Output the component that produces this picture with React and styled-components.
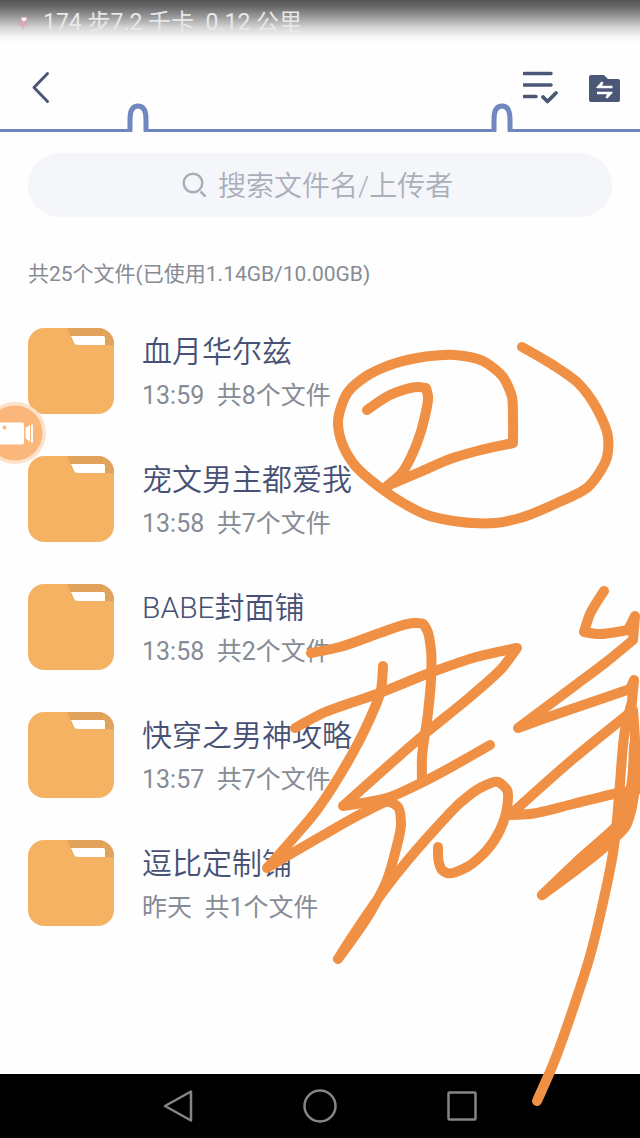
import React from 'react';
import styled, { createGlobalStyle } from 'styled-components';

const GlobalStyle = createGlobalStyle`
  * { box-sizing: border-box; }
  body {
    margin: 0;
    background: #fefefe;
    font-family: Roboto, "Noto Sans CJK SC", sans-serif;
  }
  button { padding: 0; border: 0; background: none; cursor: pointer; }
  svg { display: block; }
`;

const Page = styled.div`
  position: relative;
  display: flex;
  flex-direction: column;
  min-height: 100vh;
  overflow: hidden;
`;

const StatusBar = styled.div`
  display: flex;
  align-items: center;
  gap: 13px;
  height: 44px;
  padding: 2px 18px 0;
  color: #e8e8e8;
  font-size: 23px;
  line-height: 42px;
  white-space: pre;
  background: linear-gradient(#555 0, #666 6px, #959595 16px, #d2d2d2 27px, #f6f6f6 37px, #fefefe 44px);
`;

const Header = styled.header`
  position: relative;
  display: flex;
  align-items: center;
  justify-content: space-between;
  height: 88px;
  padding: 0 20px 0 30px;
  border-bottom: 3px solid #6f86bd;
`;

const Actions = styled.div`
  display: flex;
  gap: 30px;
`;

const IconButton = styled.button`
  display: flex;
  color: #4b5776;
`;

const Arch = styled.svg`
  position: absolute;
  bottom: -3px;
  ${({ $side }) => $side}: 127px;
`;

const Main = styled.main`
  flex: 1;
  padding: 21px 28px 0;
`;

const SearchBox = styled.label`
  display: flex;
  align-items: center;
  justify-content: center;
  gap: 10px;
  height: 64px;
  border-radius: 32px;
  background: #f4f6fa;
  color: #a9afba;
`;

const SearchInput = styled.input`
  width: 240px;
  height: 44px;
  padding: 3px 0 0;
  border: 0;
  outline: 0;
  background: none;
  color: #4b5776;
  font-family: inherit;
  font-size: 28px;
  font-weight: 350;
  &::placeholder { color: #a9afba; opacity: 1; }
`;

const Summary = styled.p`
  margin: 41px 0 38px;
  color: #868b95;
  font-size: 21px;
  line-height: 32px;
`;

const FileList = styled.ul`
  display: flex;
  flex-direction: column;
  gap: 42px;
  margin: 0;
  padding: 0;
  list-style: none;
`;

const FolderRow = styled.li`
  display: flex;
  align-items: center;
  gap: 28px;
  height: 86px;
`;

const FolderText = styled.div`
  display: flex;
  flex-direction: column;
  gap: 4px;
  padding-top: 2px;
`;

const FolderName = styled.span`
  color: #465175;
  font-size: 30px;
  font-weight: 350;
  line-height: 44px;
  white-space: nowrap;
`;

const FolderMeta = styled.span`
  color: #868b95;
  font-size: 25px;
  line-height: 36px;
  white-space: pre;
`;

const RecordButton = styled.button`
  position: absolute;
  top: 402px;
  left: -16px;
`;

const NavBar = styled.nav`
  display: flex;
  justify-content: center;
  height: 64px;
  background: #000;
`;

const NavButton = styled.button`
  display: flex;
  align-items: center;
  justify-content: center;
  width: 142px;
`;

const Ink = styled.svg`
  position: absolute;
  top: 0;
  left: 0;
  pointer-events: none;
`;

const folders = [
  { name: '血月华尔兹', time: '13:59', count: 8 },
  { name: '宠文男主都爱我', time: '13:58', count: 7 },
  { name: 'BABE封面铺', time: '13:58', count: 2 },
  { name: '快穿之男神攻略', time: '13:57', count: 7 },
  { name: '逗比定制铺', time: '昨天', count: 1 },
];

// Pen strokes as the points the finger passed through; a repeated point is a hard corner.
const strokes = [
  [[522,347],[553,365],[577,382],[593,402],[608,437],[607,457],[588,487],[557,503],[520,518],[495,523],[472,523],[427,515],[403,503],[382,489],[353,463],[342,443],[338,422],[348,392],[365,377],[390,365],[417,358],[455,355],[483,361],[503,377],[512,397],[513,417],[513,443],[477,451],[450,459],[420,472],[387,486],[400,475],[417,443],[425,416],[428,396],[426,388],[418,387],[390,395],[367,410]],
  [[311,653],[340,647],[380,633],[414,623],[423,624],[427,630],[431,650],[431,680],[428,713],[422,757],[422,782]],
  [[295,728],[323,713],[377,694],[427,674],[473,658],[517,648],[517,648],[503,667],[470,697],[427,732],[343,806],[390,797],[427,780],[490,745]],
  [[383,666],[381,690],[367,725],[343,770],[317,810],[283,850],[267,868],[320,837],[367,811],[390,802],[398,807],[401,823],[395,853],[387,880],[370,913],[338,959],[350,940],[395,876],[437,827],[460,803],[480,788],[498,782],[507,790],[507,808],[500,830],[487,850],[467,867],[447,873],[442,870],[439,863],[438,847]],
  [[604,591],[590,614],[584,632],[597,634],[628,630],[628,630],[635,616],[633,640],[633,640],[605,663],[577,684],[518,728],[560,713],[630,689],[630,689],[634,680],[631,712],[631,712],[573,759],[510,815],[530,814],[573,804],[618,793],[640,789]],
  [[631,705],[625,730],[620,783],[617,820],[613,853],[602,907],[590,956],[577,997],[552,1067],[537,1101]],
  [[633,710],[635,740],[635,787],[630,815],[626,826],[608,844],[542,895],[582,857],[620,821],[631,787],[634,745]],
];

// Smooth line through the points, left sharp where the pen turned back.
function smoothPath(points) {
  const tangent = points.map((p, i) => {
    const a = points[i - 1];
    const b = points[i + 1];
    if (!a || !b) return [0, 0];
    const u = [p[0] - a[0], p[1] - a[1]];
    const v = [b[0] - p[0], b[1] - p[1]];
    const lu = Math.hypot(...u);
    const lv = Math.hypot(...v);
    if (lu * lv === 0) return [0, 0];
    if ((u[0] * v[0] + u[1] * v[1]) / (lu * lv) < 0.45) return [0, 0];
    const x = (u[0] / lu) * lv + (v[0] / lv) * lu;
    const y = (u[1] / lu) * lv + (v[1] / lv) * lu;
    const l = Math.hypot(x, y);
    return [x / l, y / l];
  });
  let d = `M${points[0]}`;
  for (let i = 1; i < points.length; i++) {
    const p = points[i - 1];
    const q = points[i];
    const k = Math.hypot(q[0] - p[0], q[1] - p[1]) / 4;
    const s = tangent[i - 1];
    const t = tangent[i];
    d += `C${p[0] + s[0] * k} ${p[1] + s[1] * k} ${q[0] - t[0] * k} ${q[1] - t[1] * k} ${q}`;
  }
  return d;
}

const inkPaths = strokes.map(smoothPath);

const HeartIcon = () => (
  <svg width="12" height="16" viewBox="0 0 12 16" aria-hidden="true">
    <path d="M0 9h2l1-3 2 6 2-5 3 4" fill="none" stroke="#e49aac" strokeWidth="2" opacity=".6" />
    <path d="M6 7C2 4 3 1 6 3c3-2 4 1 0 4Z" fill="#fff" stroke="#efb1bd" />
  </svg>
);

const BackIcon = () => (
  <svg width="22" height="34" viewBox="0 0 22 34" fill="none" stroke="currentColor" strokeWidth="3" strokeLinecap="round" strokeLinejoin="round">
    <path d="M17.500 3.500 4 17.500l13.500 14" />
  </svg>
);

const SelectIcon = () => (
  <svg width="36" height="34" viewBox="0 0 36 34" fill="none" stroke="currentColor" strokeLinecap="round" strokeLinejoin="round">
    <path d="M1 3.500h27M1 15h27M1 26.500h12" strokeWidth="3.500" />
    <path d="m20 27 4.500 4.500 8.500-8.500" strokeWidth="3.800" />
  </svg>
);

const TransferIcon = () => (
  <svg width="31" height="34" viewBox="0 0 31 34">
    <path d="M2 5h12q1 0 2 1l3 3h10q2 0 2 2v19q0 2-2 2H2q-2 0-2-2V7q0-2 2-2Z" fill="currentColor" />
    <path d="M23.500 17H8.500M8 23h15" fill="none" stroke="#fff" strokeWidth="2.600" />
    <path d="M7 18 12.500 11.500l2 1-2.500 5.500ZM24 22 18.500 28.500l-2-1 2.500-5.500Z" fill="#fff" />
  </svg>
);

const ArchShape = ({ side }) => (
  <Arch $side={side} width="22" height="29" viewBox="0 0 22 29" aria-hidden="true">
    <path d="M5 29V17C5 7 8 3.500 11 3.500S17 7 17 17v12Z" fill="#fefefe" />
    <path d="M3 28.500V16C3 6 7 3 11 3s8 3 8 13v12.500" fill="none" stroke="#7187c0" strokeWidth="5" />
  </Arch>
);

const SearchIcon = () => (
  <svg width="26" height="26" viewBox="0 0 26 26" fill="none" stroke="currentColor" strokeWidth="2.500" aria-hidden="true">
    <circle cx="11" cy="11" r="9.300" />
    <path d="m18.500 19.500 5 5" />
  </svg>
);

const FolderIcon = () => (
  <svg width="86" height="86" viewBox="0 0 86 86" aria-hidden="true">
    <rect width="86" height="86" rx="16" fill="#f6b263" />
    <path d="M39 0h31a16 16 0 0 1 16 16v1H49Q46 17 44 12Z" fill="#e1a25c" />
    <path d="M43 8h32q2 0 2 2v7H50q-3 0-4-2Z" fill="#fff" />
  </svg>
);

const CameraIcon = () => (
  <svg width="62" height="62" viewBox="0 0 62 62">
    <circle cx="31" cy="31" r="31" fill="#fde1c8" />
    <circle cx="31" cy="31" r="27.500" fill="#fbb67c" />
    <rect x="10" y="20.500" width="30" height="22" rx="2" fill="#fff" />
    <circle cx="20.500" cy="25.500" r="2" fill="#fbb67c" />
    <path d="m41.500 26 4.500-3v17l-4.500-4Z" fill="#fff" />
    <path d="M48 22.500v18" stroke="#fff" strokeWidth="2" />
  </svg>
);

export default function App() {
  return (
    <Page>
      <GlobalStyle />
      <StatusBar>
        <HeartIcon />
        <span>{'174 步7.2 千卡  0.12 公里'}</span>
      </StatusBar>
      <Header>
        <IconButton type="button" aria-label="返回"><BackIcon /></IconButton>
        <Actions>
          <IconButton type="button" aria-label="多选"><SelectIcon /></IconButton>
          <IconButton type="button" aria-label="传输列表"><TransferIcon /></IconButton>
        </Actions>
        <ArchShape side="left" />
        <ArchShape side="right" />
      </Header>
      <Main>
        <SearchBox>
          <SearchIcon />
          <SearchInput type="text" aria-label="搜索" placeholder="搜索文件名/上传者" />
        </SearchBox>
        <Summary>共25个文件(已使用1.14GB/10.00GB)</Summary>
        <FileList>
          {folders.map(({ name, time, count }) => (
            <FolderRow key={name}>
              <FolderIcon />
              <FolderText>
                <FolderName>{name}</FolderName>
                <FolderMeta>{`${time}  共${count}个文件`}</FolderMeta>
              </FolderText>
            </FolderRow>
          ))}
        </FileList>
      </Main>
      <RecordButton type="button" aria-label="录屏"><CameraIcon /></RecordButton>
      <NavBar>
        <NavButton type="button" aria-label="后退">
          <svg width="32" height="34" viewBox="0 0 32 34" fill="none" stroke="#858585" strokeWidth="2.500" strokeLinejoin="round">
            <path d="M29 2.500v29L3 17Z" />
          </svg>
        </NavButton>
        <NavButton type="button" aria-label="主页">
          <svg width="34" height="34" viewBox="0 0 34 34" fill="none" stroke="#858585" strokeWidth="2.500">
            <circle cx="17" cy="17" r="15.500" />
          </svg>
        </NavButton>
        <NavButton type="button" aria-label="最近任务">
          <svg width="32" height="32" viewBox="0 0 32 32" fill="none" stroke="#858585" strokeWidth="2.500">
            <rect x="2.500" y="2.500" width="27" height="27" rx="1" />
          </svg>
        </NavButton>
      </NavBar>
      <Ink width="640" height="1138" viewBox="0 0 640 1138" fill="none" stroke="#f09045" strokeWidth="10" strokeLinecap="round" strokeLinejoin="round" aria-hidden="true">
        {inkPaths.map((d, i) => <path key={i} d={d} />)}
        <path d="M542 895 608 844 622 822 582 857Z" fill="#f09045" />
      </Ink>
    </Page>
  );
}
